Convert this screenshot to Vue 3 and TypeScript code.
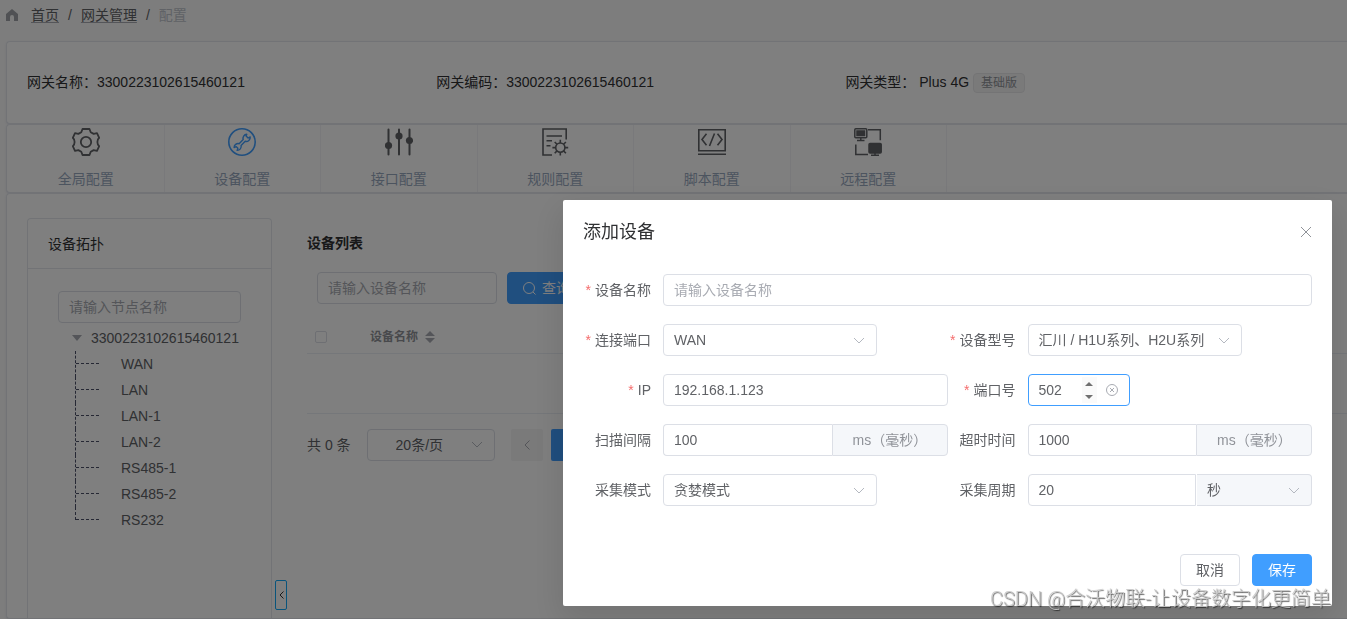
<script setup lang="ts">
import { ref } from 'vue'

interface Tab {
  key: string
  label: string
}

const gatewayId = '3300223102615460121'

const tabs: Tab[] = [
  { key: 'global', label: '全局配置' },
  { key: 'device', label: '设备配置' },
  { key: 'port', label: '接口配置' },
  { key: 'rule', label: '规则配置' },
  { key: 'script', label: '脚本配置' },
  { key: 'remote', label: '远程配置' },
]
const activeTab = ref('device')

const ports: string[] = ['WAN', 'LAN', 'LAN-1', 'LAN-2', 'RS485-1', 'RS485-2', 'RS232']

const nodeFilter = ref('')
const deviceFilter = ref('')
const pageSize = ref('20')

const name = ref('')
const port = ref('WAN')
const model = ref('h1u')
const ip = ref('192.168.1.123')
const portNumber = ref<number | ''>(502)
const scanInterval = ref('100')
const timeout = ref('1000')
const mode = ref('greedy')
const period = ref('20')
const unit = ref('s')

function step(delta: number) {
  portNumber.value = Number(portNumber.value || 0) + delta
}
</script>

<template>
  <div class="page">
    <nav class="crumbs">
      <svg class="home" viewBox="0 0 12 12"><path d="M6 0 0 5v7h4V8a2 2 0 0 1 4 0v4h4V5z" fill="currentColor" /></svg>
      <a href="#">首页</a>
      <span class="slash">/</span>
      <a href="#">网关管理</a>
      <span class="slash">/</span>
      <span class="current">配置</span>
    </nav>

    <section class="card info">
      <div>网关名称：{{ gatewayId }}</div>
      <div>网关编码：{{ gatewayId }}</div>
      <div>网关类型：&nbsp;Plus 4G <span class="tag">基础版</span></div>
    </section>

    <section class="card tabs-card">
      <div class="tabs">
        <button
          v-for="tab in tabs"
          :key="tab.key"
          type="button"
          class="tab"
          :class="{ active: tab.key === activeTab }"
          @click="activeTab = tab.key"
        >
          <svg v-if="tab.key === 'global'" viewBox="0 0 28 28" fill="none" stroke="currentColor" stroke-width="1.8" stroke-linejoin="round">
            <path d="M10.500 1h7l1.200 3.200 3 1.700 3.300-.7 2.200 4.600q-1.800 1.400-1.800 4.200t1.800 4.200l-2.200 4.600-3.300-.7-3 1.700-1.200 3.200h-7l-1.200-3.200-3-1.700-3.300.7-2.200-4.600q1.800-1.400 1.800-4.200t-1.800-4.200l2.200-4.600 3.300.7 3-1.700z" />
            <circle cx="14" cy="14" r="5.200" />
          </svg>
          <svg v-else-if="tab.key === 'device'" viewBox="0 0 28 28" fill="none" stroke="currentColor" stroke-width="1.600" stroke-linejoin="round">
            <circle cx="14" cy="14" r="13.200" />
            <path stroke-width="1.400" d="M18.800 6.300a4 4 0 0 0-3.600 5.300l-4.100 4.100a4 4 0 0 0-5 3.800l2.200-.8 1.600 1.600-.8 2.100a4 4 0 0 0 4-5l4.100-4.100a4 4 0 0 0 5-4.400l-2.100 1.100-2-2z" />
          </svg>
          <svg v-else-if="tab.key === 'port'" viewBox="0 0 28 28" fill="none" stroke="currentColor" stroke-width="2" stroke-linecap="round">
            <path d="M3.500 1.500v25M14 1.500v25M24.500 1.500v25" />
            <g fill="currentColor" stroke="none">
              <circle cx="3.500" cy="17.500" r="3.600" />
              <circle cx="14" cy="8" r="3.600" />
              <circle cx="24.500" cy="12.500" r="3.600" />
            </g>
          </svg>
          <svg v-else-if="tab.key === 'rule'" viewBox="0 0 28 28" fill="none" stroke="currentColor" stroke-width="1.600">
            <path d="M11 27H2V1h23.200v10.500" />
            <path d="M5.500 8H21M5.500 12.800H11M5.500 17.800H9.500" />
            <circle cx="19.300" cy="19.600" r="4.600" />
            <path d="M19.300 15v-3.300M19.300 24.200v3.300M14.700 19.600h-3.300M23.900 19.600h3.300M16 16.300l-2.300-2.300M22.600 22.900l2.300 2.300M16 22.900l-2.300 2.300M22.600 16.300l2.300-2.300" />
          </svg>
          <svg v-else-if="tab.key === 'script'" viewBox="0 0 28 28" fill="none" stroke="currentColor" stroke-width="1.600">
            <path d="M.8 1.800h26.400v21H.8zM0 26.300h28" />
            <path d="M8.500 5.800 4 11.500l4.500 5.700M19.500 5.800l4.500 5.700-4.500 5.700M16.500 5.500l-5 12.500" />
          </svg>
          <svg v-else viewBox="0 0 28 28" fill="none" stroke="currentColor" stroke-width="1.500">
            <rect x=".8" y=".8" width="12" height="9" rx="1" />
            <path d="M6.800 10v2.500M3 12.500h7.500M14 1.800h12.300v10.500M1.800 16.500v10H14M21 25v2M17 27.200h8" />
            <path d="M3 3h7.500v4.500H3z" fill="currentColor" />
            <rect x="15" y="15.500" width="12.200" height="9.500" rx="1" fill="currentColor" />
          </svg>
          <span>{{ tab.label }}</span>
        </button>
      </div>
    </section>

    <section class="card body">
      <aside class="topology">
        <header>设备拓扑</header>
        <div class="tree-body">
          <input v-model="nodeFilter" class="field" type="text" aria-label="节点名称" placeholder="请输入节点名称" />
          <ul class="tree">
            <li class="root">
              <svg class="caret" viewBox="0 0 10 6"><path d="M0 0h10L5 6z" fill="currentColor" /></svg>
              <span>{{ gatewayId }}</span>
            </li>
            <li v-for="item in ports" :key="item" class="leaf">
              <span class="branch"><i></i></span>
              <span>{{ item }}</span>
            </li>
          </ul>
        </div>
      </aside>

      <button type="button" class="handle" aria-label="收起">
        <svg viewBox="0 0 5 8" fill="none" stroke="currentColor"><path d="M4.500.5 1 4l3.500 3.500" /></svg>
      </button>

      <div class="list">
        <h2>设备列表</h2>
        <div class="filters">
          <input v-model="deviceFilter" class="field" type="text" aria-label="设备名称" placeholder="请输入设备名称" />
          <button type="button" class="btn primary search">
            <svg viewBox="0 0 13 13" fill="none" stroke="currentColor"><circle cx="6" cy="6" r="5.500" /><path d="m10 10 2.500 2.500" /></svg>
            <span>查询</span>
          </button>
        </div>
        <table>
          <thead>
            <tr>
              <th class="check"><input type="checkbox" aria-label="全选" /></th>
              <th>
                <span class="sortable">
                  设备名称
                  <svg viewBox="0 0 10 12"><path d="M0 5h10L5 0zM0 7h10l-5 5z" fill="currentColor" /></svg>
                </span>
              </th>
            </tr>
          </thead>
          <tbody>
            <tr><td colspan="2"></td></tr>
          </tbody>
        </table>
        <div class="pager">
          <span>共 0 条</span>
          <div class="select page-size">
            <select v-model="pageSize" aria-label="每页条数"><option value="20">20条/页</option></select>
            <svg viewBox="0 0 12 7"><path d="m1 1 5 5 5-5" /></svg>
          </div>
          <div class="pages">
            <button type="button" class="page-btn" aria-label="上一页">
              <svg viewBox="0 0 6 10" fill="none" stroke="currentColor"><path d="M5.500.5 1 5l4.500 4.500" /></svg>
            </button>
            <button type="button" class="page-btn on" aria-label="第一页"></button>
          </div>
        </div>
      </div>
    </section>

    <div class="mask">
      <div class="dialog" role="dialog" aria-labelledby="dialog-title">
        <header class="dialog-head">
          <h1 id="dialog-title">添加设备</h1>
          <button type="button" class="close" aria-label="关闭">
            <svg viewBox="0 0 12 12" fill="none" stroke="currentColor"><path d="m1 1 10 10M11 1 1 11" /></svg>
          </button>
        </header>

        <form class="form" @submit.prevent>
          <div class="item wide">
            <label class="required" for="f-name">设备名称</label>
            <input id="f-name" v-model="name" class="field" type="text" placeholder="请输入设备名称" />
          </div>
          <div class="item">
            <label class="required" for="f-port">连接端口</label>
            <div class="select short">
              <select id="f-port" v-model="port">
                <option v-for="item in ports" :key="item" :value="item">{{ item }}</option>
              </select>
              <svg viewBox="0 0 12 7"><path d="m1 1 5 5 5-5" /></svg>
            </div>
          </div>
          <div class="item">
            <label class="required" for="f-model">设备型号</label>
            <div class="select short">
              <select id="f-model" v-model="model"><option value="h1u">汇川 / H1U系列、H2U系列</option></select>
              <svg viewBox="0 0 12 7"><path d="m1 1 5 5 5-5" /></svg>
            </div>
          </div>
          <div class="item">
            <label class="required" for="f-ip">IP</label>
            <input id="f-ip" v-model="ip" class="field" type="text" />
          </div>
          <div class="item">
            <label class="required" for="f-number">端口号</label>
            <div class="number">
              <input id="f-number" v-model="portNumber" type="number" />
              <span class="spin">
                <button type="button" aria-label="增加" @click="step(1)"><svg viewBox="0 0 8 4"><path d="M0 4h8L4 0z" fill="currentColor" /></svg></button>
                <button type="button" aria-label="减少" @click="step(-1)"><svg viewBox="0 0 8 4"><path d="M0 0h8L4 4z" fill="currentColor" /></svg></button>
              </span>
              <button type="button" class="clear" aria-label="清空" @click="portNumber = ''">
                <svg viewBox="0 0 12 12" fill="none" stroke="currentColor"><circle cx="6" cy="6" r="5.500" /><path d="m4 4 4 4M8 4 4 8" /></svg>
              </button>
            </div>
          </div>
          <div class="item">
            <label for="f-scan">扫描间隔</label>
            <div class="group">
              <input id="f-scan" v-model="scanInterval" class="field" type="text" />
              <span class="append">ms（毫秒）</span>
            </div>
          </div>
          <div class="item">
            <label for="f-timeout">超时时间</label>
            <div class="group">
              <input id="f-timeout" v-model="timeout" class="field" type="text" />
              <span class="append">ms（毫秒）</span>
            </div>
          </div>
          <div class="item">
            <label for="f-mode">采集模式</label>
            <div class="select short">
              <select id="f-mode" v-model="mode"><option value="greedy">贪婪模式</option></select>
              <svg viewBox="0 0 12 7"><path d="m1 1 5 5 5-5" /></svg>
            </div>
          </div>
          <div class="item">
            <label for="f-period">采集周期</label>
            <div class="group split">
              <input id="f-period" v-model="period" class="field" type="text" />
              <div class="select unit">
                <select v-model="unit" aria-label="周期单位"><option value="s">秒</option></select>
                <svg viewBox="0 0 12 7"><path d="m1 1 5 5 5-5" /></svg>
              </div>
            </div>
          </div>
        </form>

        <footer class="dialog-foot">
          <button type="button" class="btn">取消</button>
          <button type="button" class="btn primary">保存</button>
        </footer>
      </div>
    </div>

    <div class="watermark">CSDN @合沃物联-让设备数字化更简单</div>
  </div>
</template>

<style>
body {
  margin: 0;
  overflow: hidden;
}
</style>

<style scoped>
.page,
.page * {
  box-sizing: border-box;
}
.page {
  display: flex;
  flex-direction: column;
  height: 100vh;
  overflow: hidden;
  padding-left: 6px;
  background: #fafafa;
  color: #303133;
  font: 14px/20px "Liberation Sans", "Noto Sans CJK SC", sans-serif;
}
input,
select,
button {
  font: inherit;
  color: inherit;
}
button {
  padding: 0;
  border: 0;
  background: none;
  cursor: pointer;
}
svg {
  display: block;
  flex: none;
}

.crumbs {
  display: flex;
  align-items: center;
  height: 41px;
  padding-bottom: 11px;
  flex: none;
  color: #606266;
}
.home {
  width: 12px;
  height: 12px;
  margin-right: 13px;
  color: #a0a3a8;
}
.crumbs a {
  color: #606266;
  text-decoration: underline;
  text-decoration-color: #a8abb2;
  text-underline-offset: 2px;
}
.slash {
  margin: 0 9px;
}
.current {
  color: #c0c4cc;
}

.card {
  flex: none;
  background: #fff;
  border: 1px solid #e4e7ed;
  border-right: 0;
  border-radius: 4px 0 0 4px;
  box-shadow: 0 1px 2px #e4e4ec;
}
.info {
  display: grid;
  grid-template-columns: repeat(3, 31%);
  height: 83px;
  padding: 30px 0 0 20px;
}
.tag {
  display: inline-block;
  height: 20px;
  padding: 0 7px;
  border: 1px solid #e9e9eb;
  border-radius: 4px;
  background: #f4f4f5;
  color: #909399;
  font-size: 12px;
  line-height: 18px;
}
.tabs {
  display: grid;
  grid-template-columns: repeat(6, 1fr);
  width: calc(70% + 1px);
  height: 67px;
  margin-left: 1px;
}
.tab {
  display: flex;
  flex-direction: column;
  align-items: center;
  gap: 13px;
  padding-top: 3px;
  border-right: 1px solid #f2f3f6;
  color: #606266;
}
.tab svg {
  width: 28px;
  height: 28px;
}
.tab span {
  color: #99a9bf;
}
.tab.active {
  color: #409eff;
}
.body {
  display: flex;
  flex: 1;
  min-height: 0;
  padding: 24px 0 0 20px;
}
.topology {
  width: 245px;
  border: 1px solid #e4e7ed;
  border-bottom: 0;
  border-radius: 4px 4px 0 0;
}
.topology header {
  height: 50px;
  padding-left: 20px;
  border-bottom: 1px solid #e4e7ed;
  line-height: 50px;
}
.tree-body {
  padding: 22px 30px;
}
.field {
  width: 100%;
  min-width: 0;
  height: 32px;
  padding: 0 10px;
  border: 1px solid #dcdfe6;
  border-radius: 4px;
  outline: 0;
  background: #fff;
  color: #606266;
}
.field::placeholder {
  color: #a8abb2;
  opacity: 1;
}
.tree {
  margin: 2px 0 0;
  padding: 0;
  list-style: none;
  color: #606266;
}
.tree li {
  display: flex;
  height: 26px;
  line-height: 26px;
}
.root {
  align-items: center;
  gap: 9px;
  padding-left: 14px;
}
.caret {
  width: 10px;
  height: 6px;
  color: #a8abb2;
}
.leaf {
  gap: 22px;
  padding-left: 17px;
}
.branch {
  width: 24px;
  height: 26px;
  border-left: 1px dashed #4c5068;
}
.branch i {
  display: block;
  height: 13px;
  border-bottom: 1px dashed #4c5068;
}
.leaf:last-child .branch {
  height: 13px;
}
.handle {
  display: grid;
  place-items: center;
  align-self: flex-end;
  width: 12px;
  height: 30px;
  margin: 0 20px 8px 3px;
  border: 1px solid #10a8f8;
  border-radius: 2px;
  color: #303133;
}
.handle svg {
  width: 5px;
  height: 8px;
}
.list {
  flex: 1;
  min-width: 0;
  padding-top: 15px;
}
.list h2 {
  margin: 0 0 19px;
  font-size: 14px;
  line-height: 20px;
}
.filters {
  display: flex;
  gap: 10px;
  padding-left: 10px;
}
.filters .field {
  width: 180px;
}
.btn {
  display: flex;
  align-items: center;
  justify-content: center;
  height: 32px;
  padding: 0 15px;
  border: 1px solid #dcdfe6;
  border-radius: 4px;
  background: #fff;
  color: #606266;
}
.btn.primary {
  border-color: #409eff;
  background: #409eff;
  color: #fff;
}
.search {
  gap: 6px;
}
.search svg {
  width: 13px;
  height: 13px;
}
table {
  width: 100%;
  margin-top: 15px;
  border-collapse: collapse;
  table-layout: fixed;
}
th {
  height: 34px;
  padding: 2px 10px 0;
  border-bottom: 1px solid #ebeef5;
  color: #909399;
  font-size: 12px;
  text-align: left;
}
td {
  height: 60px;
  border-bottom: 1px solid #ebeef5;
}
.check {
  width: 53px;
  padding: 3px 8px 0;
}
.check input {
  display: block;
  width: 12px;
  height: 12px;
  margin: 0;
  appearance: none;
  border: 1px solid #dcdfe6;
  border-radius: 2px;
}
.sortable {
  display: flex;
  align-items: center;
  gap: 7px;
}
.sortable svg {
  width: 10px;
  height: 12px;
  color: #a8abb2;
}
.pager {
  display: flex;
  align-items: center;
  gap: 16px;
  margin-top: 15px;
  color: #606266;
}
.pages {
  display: flex;
  gap: 8px;
}
.page-btn {
  display: grid;
  place-items: center;
  width: 32px;
  height: 32px;
  border-radius: 2px;
  background: #f4f4f5;
  color: #a8abb2;
}
.page-btn svg {
  width: 6px;
  height: 10px;
}
.page-btn.on {
  background: #409eff;
}

.select {
  display: grid;
  align-items: center;
}
.select > * {
  grid-area: 1 / 1;
}
.select select {
  width: 100%;
  height: 32px;
  padding: 0 30px 0 10px;
  appearance: none;
  border: 1px solid #dcdfe6;
  border-radius: 4px;
  outline: 0;
  background: #fff;
  color: #606266;
}
.select svg {
  justify-self: end;
  width: 12px;
  height: 7px;
  margin-right: 12px;
  fill: none;
  stroke: #b4b8c0;
  pointer-events: none;
}
.page-size {
  width: 128px;
}
.page-size select {
  padding-left: 28px;
}

.mask {
  position: fixed;
  inset: 0;
  display: flex;
  align-items: flex-start;
  padding: 200px 15px 0 563px;
  background: rgba(0, 0, 0, 0.5);
}
.dialog {
  flex: 1;
  min-width: 0;
  padding: 20px;
  border-radius: 2px;
  background: #fff;
  box-shadow: 0 12px 32px 4px rgba(0, 0, 0, 0.1);
}
.dialog-head {
  display: flex;
  align-items: center;
  justify-content: space-between;
  margin-bottom: 30px;
}
.dialog-head h1 {
  margin: 0;
  font-size: 18px;
  font-weight: 400;
  line-height: 24px;
}
.close {
  color: #909399;
}
.close svg {
  width: 12px;
  height: 12px;
}
.form {
  display: grid;
  grid-template-columns: 1fr 1fr;
  row-gap: 18px;
}
.item {
  display: grid;
  grid-template-columns: 80px minmax(0, 1fr);
  align-items: center;
}
.wide {
  grid-column: 1 / -1;
}
.item label {
  padding-right: 12px;
  color: #606266;
  text-align: right;
}
.required::before {
  content: "*";
  margin-right: 4px;
  color: #f56c6c;
}
.short {
  width: 214px;
}
.number {
  display: flex;
  align-items: center;
  width: 102px;
  height: 32px;
  padding: 0 11px 0 10px;
  border: 1px solid #409eff;
  border-radius: 4px;
  color: #606266;
}
.number input {
  flex: 1;
  width: 0;
  min-width: 0;
  padding: 0;
  border: 0;
  outline: 0;
  appearance: textfield;
}
.number input::-webkit-inner-spin-button {
  display: none;
}
.spin {
  display: grid;
  width: 15px;
  height: 26px;
  margin-right: 9px;
  background: #fafafa;
  color: #707070;
}
.spin button {
  display: grid;
  place-items: center;
}
.spin svg {
  width: 8px;
  height: 4px;
}
.clear {
  color: #a8abb2;
}
.clear svg {
  width: 12px;
  height: 12px;
}
.group {
  display: grid;
  grid-template-columns: minmax(0, 1fr) 116px;
}
.group .field {
  border-right: 0;
  border-radius: 4px 0 0 4px;
}
.append {
  height: 32px;
  padding: 0 20px;
  border: 1px solid #dcdfe6;
  border-radius: 0 4px 4px 0;
  background: #f5f7fa;
  color: #909399;
  line-height: 30px;
  white-space: nowrap;
}
.split {
  column-gap: 1px;
  grid-template-columns: minmax(0, 1fr) 115px;
}
.split .field {
  border-right: 1px solid #dcdfe6;
}
.unit select {
  border-left: 0;
  border-radius: 0 4px 4px 0;
  background: #f5f7fa;
}
.dialog-foot {
  display: flex;
  justify-content: flex-end;
  gap: 12px;
  margin-top: 48px;
}

.watermark {
  position: fixed;
  right: 16px;
  bottom: 6px;
  color: rgba(200, 200, 200, 0.9);
  font: 300 20px/28px Roboto, "Noto Sans CJK SC", sans-serif;
  text-shadow: 1px 1px 1px rgba(0, 0, 0, 0.6);
  white-space: nowrap;
  pointer-events: none;
}
</style>
